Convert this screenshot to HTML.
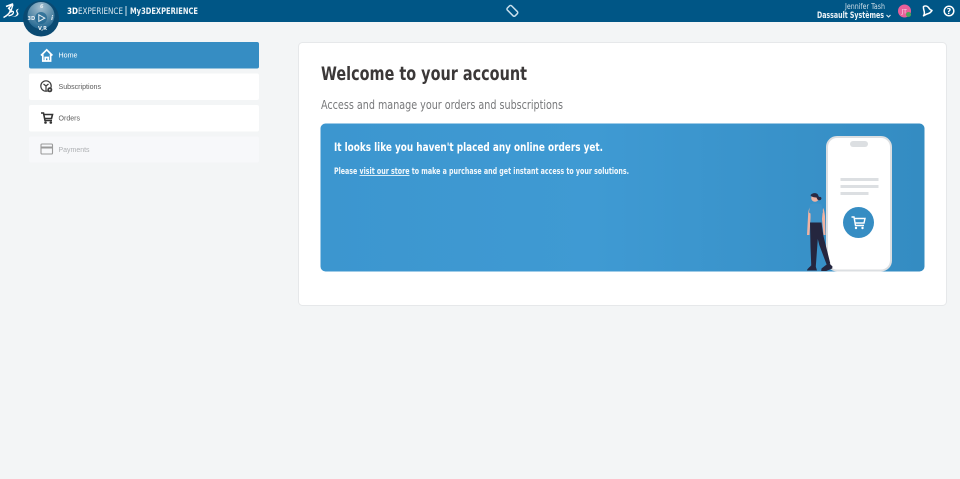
<!DOCTYPE html>
<html><head><meta charset="utf-8"><title>My3DEXPERIENCE</title>
<style>
html,body{margin:0;padding:0;background:#f3f5f6;width:960px;height:479px;overflow:hidden}
svg{display:block}
text{font-family:"DejaVu Sans","Liberation Sans",sans-serif}
.a{font-family:"Liberation Sans",sans-serif}
</style></head><body>
<svg width="960" height="479" viewBox="0 0 960 479" xmlns="http://www.w3.org/2000/svg">
<defs>
<linearGradient id="g" x1="0" x2="1" y1="0" y2="0"><stop offset="0" stop-color="#3c96cf"/><stop offset=".45" stop-color="#3f9ad3"/><stop offset="1" stop-color="#348cc2"/></linearGradient>
<radialGradient id="c" cx=".5" cy=".2" r=".8"><stop offset="0" stop-color="#a4bfd0"/><stop offset=".55" stop-color="#5d8eab"/><stop offset="1" stop-color="#1f6590"/></radialGradient>
</defs>
<rect width="960" height="479" fill="#f3f5f6"/>
<!-- header -->
<rect width="960" height="22" fill="#005686"/>
<path d="M6 6.500L12.500 4 8.500 8.500C11.500 9 11 13.500 3.500 17.500" fill="none" stroke="#fff" stroke-width="1.500" stroke-linejoin="round"/>
<path d="M13 4.500L10.500 12.500M10.500 12.500C12 10.500 14 11 13.300 13 12.800 14.500 10.500 15.500 8.500 15.800" fill="none" stroke="#fff" stroke-width="1.300"/>
<path d="M19 8.800C16.500 9 15.500 10.500 16.300 12 17 13.300 17.500 14 15.500 15.800 13.500 16.800 12.500 16.800 11.500 16.800 15.500 17.300 18.500 15.800 18.500 13.800 18.500 12.500 17 11.800 17.500 10.500 17.700 10 18.200 9.500 19 8.800Z" fill="#fff"/>
<circle cx="41" cy="18.500" r="18" fill="#0a4a72"/>
<circle cx="41" cy="15.500" r="13.500" fill="url(#c)"/>
<circle cx="41" cy="18" r="6" fill="#1f6590" opacity=".75"/>
<path d="M38.800 14.800l6 3.300-6 3.300z" fill="none" stroke="#e4edf3" stroke-width="1"/>
<text x="27.500" y="20" font-size="5" font-weight="700" fill="#e6eef3">3D</text>
<text x="51" y="20" font-size="6" font-style="italic" font-weight="700" fill="#e6eef3">i</text>
<text x="40" y="8" font-size="5" font-style="italic" font-weight="700" fill="#e6eef3">6</text>
<text x="38" y="30" font-size="5" font-weight="700" fill="#e6eef3">V,R</text>
<text x="67" y="14" font-size="8.500" fill="#dbe8f0" textLength="56" lengthAdjust="spacingAndGlyphs"><tspan font-weight="700" fill="#fff">3D</tspan>EXPERIENCE</text>
<rect x="125.500" y="6" width="1" height="10" fill="#cfe0ea"/>
<text x="130" y="14" font-size="8.500" font-weight="700" fill="#eef4f8" textLength="68" lengthAdjust="spacingAndGlyphs">My3DEXPERIENCE</text>
<g transform="rotate(-45 512 10.500)"><rect x="509" y="5.500" width="6" height="11" rx="1.500" fill="none" stroke="#c8dfec" stroke-width="1.500"/></g>
<text x="885" y="9" font-size="7.500" fill="#cfdfe9" text-anchor="end" textLength="40" lengthAdjust="spacingAndGlyphs">Jennifer Tash</text>
<text x="817" y="18" font-size="8.500" font-weight="700" fill="#eef4f8" textLength="67" lengthAdjust="spacingAndGlyphs">Dassault Systèmes</text>
<path d="M886.500 15l2 2 2-2" fill="none" stroke="#e6eef3" stroke-width="1"/>
<circle cx="904.500" cy="11" r="6.500" fill="#e8609a"/>
<text x="901.500" y="13.500" font-size="6" fill="#f7d5e4">JT</text>
<circle cx="908.500" cy="14.500" r="2.500" fill="#4ca65a"/>
<path d="M923.500 6.500c2-1 4-.5 5 1 .7 1.200 1.500 2.300 3.500 3-.8 1.500-3 3-5 3.500-1 .3-2.500 1.200-3.500 1.800.8-1.200 1.200-2.500.7-4.500-.5-1.700-1-3.300-.7-4.800z" fill="none" stroke="#fff" stroke-width="1.500" stroke-linejoin="round"/>
<circle cx="949" cy="11" r="4.800" fill="none" stroke="#fff" stroke-width="1.500"/>
<text x="949" y="14" font-size="8" font-weight="700" fill="#fff" text-anchor="middle">?</text>
<!-- sidebar -->
<rect x="29" y="42" width="230" height="26.500" rx="2" fill="#368dc3"/>
<rect x="29" y="73.500" width="230" height="26.500" rx="2" fill="#fff"/>
<rect x="29" y="105" width="230" height="26.500" rx="2" fill="#fff"/>
<rect x="29" y="136.500" width="230" height="26" rx="2" fill="#f7f8fa"/>
<path d="M41 55.500l5.700-5.700 5.700 5.700M42.800 54.500v6.500h7.800v-6.500M45.200 61v-3.500h3v3.500" fill="none" stroke="#fff" stroke-width="1.700"/>
<circle cx="46" cy="86" r="5.200" fill="none" stroke="#3c3c3c" stroke-width="1.200"/>
<path d="M43.500 84l2.500 2 2.500-2M46 86v5" fill="none" stroke="#3c3c3c" stroke-width="1.200"/>
<circle cx="49.800" cy="89.800" r="2.500" fill="#3c3c3c"/><circle cx="49.800" cy="89.800" r=".8" fill="#fff"/>
<path d="M41 113h2.500l1.500 7.500h7M43.800 114.500h8.700l-1 4h-7" fill="none" stroke="#333" stroke-width="1.600"/>
<circle cx="45.500" cy="122.500" r="1.300" fill="#333"/><circle cx="50.800" cy="122.500" r="1.300" fill="#333"/>
<rect x="41" y="144" width="11.500" height="10" rx="1" fill="none" stroke="#9a9a9a" stroke-width="1.100"/>
<rect x="41" y="146.500" width="11.500" height="2" fill="#9a9a9a"/>
<text class="a" x="58.500" y="57.500" font-size="7.500" fill="#fff" textLength="19" lengthAdjust="spacingAndGlyphs">Home</text>
<text class="a" x="58.500" y="89" font-size="7.500" fill="#5b5b5b" textLength="42.500" lengthAdjust="spacingAndGlyphs">Subscriptions</text>
<text class="a" x="58.500" y="120.500" font-size="7.500" fill="#5b5b5b" textLength="21.500" lengthAdjust="spacingAndGlyphs">Orders</text>
<text class="a" x="58.500" y="152" font-size="7.500" fill="#aeb0b3" textLength="31" lengthAdjust="spacingAndGlyphs">Payments</text>
<!-- card -->
<rect x="298.500" y="42.500" width="648" height="263" rx="4" fill="#fff" stroke="#e6e8ea"/>
<text x="321" y="80" font-size="19" font-weight="700" fill="#3b3838" textLength="206" lengthAdjust="spacingAndGlyphs">Welcome to your account</text>
<text x="321" y="109" font-size="12" fill="#77787a" textLength="242" lengthAdjust="spacingAndGlyphs">Access and manage your orders and subscriptions</text>
<rect x="320.500" y="123.500" width="604" height="148" rx="5" fill="url(#g)"/>
<text x="334" y="151" font-size="11.500" font-weight="700" fill="#fff" textLength="269" lengthAdjust="spacingAndGlyphs">It looks like you haven't placed any online orders yet.</text>
<text x="334" y="174" font-size="8.500" font-weight="700" fill="#f2f8fc" textLength="295" lengthAdjust="spacingAndGlyphs">Please <tspan text-decoration="underline">visit our store</tspan> to make a purchase and get instant access to your solutions.</text>
<!-- phone -->
<rect x="827" y="137" width="64" height="133.500" rx="10" fill="#fff" stroke="#dcdfe2" stroke-width="2"/>
<rect x="850" y="141" width="18" height="6" rx="3" fill="#dcdfe2"/>
<rect x="840.500" y="178" width="38" height="3" fill="#dcdfe2"/>
<rect x="840.500" y="185" width="38" height="3" fill="#dcdfe2"/>
<rect x="840.500" y="192" width="28" height="3" fill="#dcdfe2"/>
<circle cx="858.500" cy="222.500" r="15.500" fill="#368dc3"/>
<path d="M851.500 217h2.500l1.500 8.500h8.500M854.500 218.500h10.500l-1 4.500h-8.800" fill="none" stroke="#fff" stroke-width="1.400"/>
<circle cx="856" cy="228" r="1.200" fill="#fff"/><circle cx="862.500" cy="228" r="1.200" fill="#fff"/>
<!-- person -->
<path d="M807 235l1.200-22c.3-3 1-5 2-6l1 2-1.800 26zM823 208c1 1 1.500 4 2 8l.5 19h-2l-1.500-16z" fill="#f0b3a2"/>
<path d="M810 204.500c3-1.500 8-1.500 11.500 0l1.500 8-1.500 1-.5 10h-10l-.5-10-1.500-1z" fill="#3f93c9"/>
<path d="M810 222.500h11.500c.8 6 1.500 12 2.800 17l6 24-3.500 1.500-7.500-20-1.500-6-2 27.500-4.500.3-.8-20z" fill="#25263f"/>
<path d="M807 270.500c.3-2 2.500-3 4-5l4.500.3 1.500 4.700zM821.500 268.500l4.500-3.500 3-2 3.500 3.500-.3 2-6 2.500h-5z" fill="#25263f"/>
<circle cx="815" cy="198" r="3.800" fill="#f0b3a2"/>
<path d="M810.500 195.500c1-2.500 5-3 7-1.500 .7 1 1 2 1.500 3 1.500-.5 3 .5 2.300 2-.5 1.500-2.500 1.500-3.500.8-.7-.5-.8-1.300-1.300-2.300-2 0-4.500-.5-6-2z" fill="#2a2a44"/>
</svg>
</body></html>
